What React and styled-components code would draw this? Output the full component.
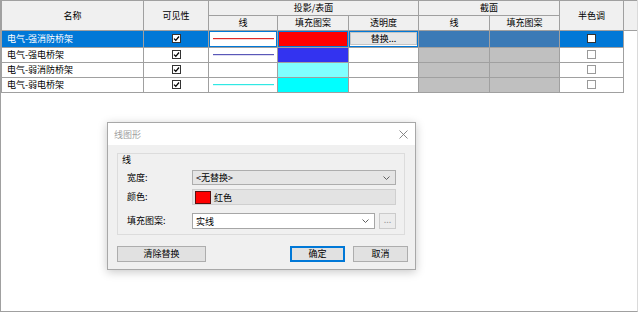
import styled, { createGlobalStyle } from 'styled-components'

const GlobalStyle = createGlobalStyle`
  html, body {
    margin: 0;
    padding: 0;
    background: #fff;
  }
  body {
    font-family: "Noto Sans CJK SC", "Noto Sans", sans-serif;
    font-size: 9px;
    color: #000;
  }
`

const Frame = styled.div`
  position: relative;
  width: 636px;
  height: 311px;
  border-left: 1px solid #a0a0a0;
  border-right: 1px solid #dadada;
  border-bottom: 1px solid #a0a0a0;
  overflow: hidden;
`

const Grid = styled.table`
  border-collapse: collapse;
  table-layout: fixed;
  width: 636px;
  line-height: 14px;
`

const Head = styled.th`
  height: 14px;
  padding: 0;
  font-weight: normal;
  text-align: center;
  background: #f0f0f0;
  border: 1px solid #a0a0a0;
  border-right: ${p => (p.$last ? 'none' : '1px solid #a0a0a0')};
  white-space: nowrap;
`

const Cell = styled.td`
  height: 14px;
  padding: 0;
  border: 1px solid #a0a0a0;
  text-align: center;
  vertical-align: middle;
  white-space: nowrap;
  overflow: hidden;
  background: ${p => p.$bg || '#fff'};
  color: ${p => (p.$selected ? '#fff' : '#000')};
  box-shadow: ${p => (p.$frame ? 'inset 0 0 0 1px #0078d7' : 'none')};
`

const NameCell = styled(Cell)`
  text-align: left;
  padding-left: 5px;
`

const EmptyCell = styled.td`
  padding: 0;
  border: none;
  background: #fff;
`

const Box = styled.span`
  display: inline-block;
  width: 9px;
  height: 9px;
  box-sizing: border-box;
  border: 1px solid ${p => (p.$light ? '#9a9a9a' : '#333')};
  background: #fff;
  vertical-align: middle;
  position: relative;
  top: -1px;
  svg {
    display: block;
  }
`

const LineSample = styled.svg`
  display: block;
  margin: 0 auto;
`

const OverrideButton = styled.div`
  margin: 1px 1px 2px;
  height: 11px;
  line-height: 11px;
  background: #e6e6e6;
  border: 1px solid #c4c4c4;
  color: #000;
`

const Dialog = styled.div`
  position: absolute;
  left: 106px;
  top: 122px;
  width: 307px;
  height: 146px;
  border: 1px solid #a8a8a8;
  background: #f0f0f0;
  box-shadow: 0 2px 9px rgba(0, 0, 0, 0.22);
  display: flex;
  flex-direction: column;
`

const TitleBar = styled.div`
  height: 22px;
  background: #fff;
  display: flex;
  align-items: center;
  justify-content: space-between;
  padding: 0 7px 0 6px;
  color: #a0a0a0;
`

const Body = styled.div`
  flex: 1;
  padding: 8px 7px 0 9px;
  display: flex;
  flex-direction: column;
`

const Group = styled.div`
  width: 288px;
  height: 82px;
  box-sizing: border-box;
  border: 1px solid #dcdcdc;
  padding: 0 8px 0 9px;
`

const GroupLabel = styled.div`
  line-height: 12px;
  margin-left: -5px;
`

const FieldRow = styled.div`
  display: grid;
  grid-template-columns: 65px 1fr;
  align-items: center;
  margin-top: ${p => p.$gap}px;
  height: ${p => p.$h}px;
`

const FieldLabel = styled.div`
  line-height: 12px;
`

const Combo = styled.div`
  flex: 1;
  height: 100%;
  box-sizing: border-box;
  display: flex;
  align-items: center;
  justify-content: space-between;
  padding: 0 5px 0 3px;
  border: 1px solid ${p => (p.$white ? '#a6a6a6' : '#adadad')};
  background: ${p => (p.$white ? '#fff' : '#e5e5e5')};
`

const ComboWrap = styled.div`
  display: flex;
  gap: 4px;
  height: 100%;
`

const ColorField = styled.div`
  height: 100%;
  box-sizing: border-box;
  display: flex;
  align-items: center;
  gap: 3px;
  padding-left: 2px;
  border: 1px solid #cfcfcf;
  background: #e3e3e3;
`

const Swatch = styled.span`
  width: 16px;
  height: 13px;
  box-sizing: border-box;
  border: 1px solid #5a1010;
  background: ${p => p.$color};
`

const MoreButton = styled.div`
  width: 17px;
  flex: none;
  box-sizing: border-box;
  border: 1px solid #cbcbcb;
  background: #ececec;
  color: #9a9a9a;
  text-align: center;
  line-height: 12px;
`

const Buttons = styled.div`
  margin-top: 11px;
  display: flex;
  align-items: center;
  height: 16px;
`

const Button = styled.div`
  width: ${p => p.$w}px;
  height: 16px;
  box-sizing: border-box;
  border: 1px solid ${p => (p.$primary ? '#0078d7' : '#adadad')};
  box-shadow: ${p => (p.$primary ? 'inset 0 0 0 1px #0078d7' : 'none')};
  background: #e1e1e1;
  text-align: center;
  line-height: 14px;
  margin-left: ${p => p.$ml || 0}px;
`

const Chevron = () => (
  <svg width="7" height="4" viewBox="0 0 7 4">
    <path d="M0.5 0.5 L3.5 3.5 L6.5 0.5" fill="none" stroke="#606060" strokeWidth="1" />
  </svg>
)

const Check = () => (
  <svg width="7" height="7" viewBox="0 0 7 7">
    <path d="M1 3.6 L2.8 5.3 L6 1.5" fill="none" stroke="#000" strokeWidth="1.3" />
  </svg>
)

const rows = [
  { name: '电气-强消防桥架', line: '#e02828', fill: '#ff0000', selected: true },
  { name: '电气-强电桥架', line: '#5a58b8', fill: '#3333f0' },
  { name: '电气-弱消防桥架', line: null, fill: '#80ffff' },
  { name: '电气-弱电桥架', line: '#30e8e4', fill: '#00ffff' },
]

const BLUE = '#0078d7'

export default function App() {
  return (
    <>
      <GlobalStyle />
      <Frame>
        <Grid>
          <colgroup>
            <col style={{ width: 142 }} />
            <col style={{ width: 65 }} />
            <col style={{ width: 69 }} />
            <col style={{ width: 71 }} />
            <col style={{ width: 70 }} />
            <col style={{ width: 71 }} />
            <col style={{ width: 70 }} />
            <col style={{ width: 64 }} />
            <col style={{ width: 14 }} />
          </colgroup>
          <thead>
            <tr>
              <Head rowSpan={2}>名称</Head>
              <Head rowSpan={2}>可见性</Head>
              <Head colSpan={3}>投影/表面</Head>
              <Head colSpan={2}>截面</Head>
              <Head rowSpan={2}>半色调</Head>
              <Head rowSpan={2} $last />
            </tr>
            <tr>
              <Head>线</Head>
              <Head>填充图案</Head>
              <Head>透明度</Head>
              <Head>线</Head>
              <Head>填充图案</Head>
            </tr>
          </thead>
          <tbody>
            {rows.map(r => (
              <tr key={r.name}>
                <NameCell $bg={r.selected ? BLUE : '#fff'} $selected={r.selected}>
                  {r.name}
                </NameCell>
                <Cell $bg={r.selected ? BLUE : '#fff'}>
                  <Box>
                    <Check />
                  </Box>
                </Cell>
                <Cell $frame={r.selected}>
                  {r.line ? (
                    <LineSample width="61" height="2" viewBox="0 0 61 2">
                      <rect x="0" y="0" width="61" height="1.2" fill={r.line} />
                    </LineSample>
                  ) : null}
                </Cell>
                <Cell $bg={r.fill} $frame={r.selected} />
                <Cell $frame={r.selected}>
                  {r.selected && <OverrideButton>替换...</OverrideButton>}
                </Cell>
                <Cell $bg={r.selected ? '#3b7ab6' : '#c0c0c0'} />
                <Cell $bg={r.selected ? '#3b7ab6' : '#c0c0c0'} />
                <Cell $bg={r.selected ? BLUE : '#fff'}>
                  <Box $light={!r.selected} />
                </Cell>
                <EmptyCell />
              </tr>
            ))}
          </tbody>
        </Grid>

        <Dialog>
          <TitleBar>
            <span>线图形</span>
            <svg width="9" height="9" viewBox="0 0 9 9">
              <path d="M0.5 0.5 L8.5 8.5 M8.5 0.5 L0.5 8.5" stroke="#7a7a7a" strokeWidth="0.9" />
            </svg>
          </TitleBar>
          <Body>
            <Group>
              <GroupLabel>线</GroupLabel>
              <FieldRow $gap={4} $h={15}>
                <FieldLabel>宽度:</FieldLabel>
                <Combo>
                  <span>&lt;无替换&gt;</span>
                  <Chevron />
                </Combo>
              </FieldRow>
              <FieldRow $gap={4} $h={16}>
                <FieldLabel>颜色:</FieldLabel>
                <ColorField>
                  <Swatch $color="#ff0000" />
                  <span>红色</span>
                </ColorField>
              </FieldRow>
              <FieldRow $gap={8} $h={16}>
                <FieldLabel>填充图案:</FieldLabel>
                <ComboWrap>
                  <Combo $white>
                    <span>实线</span>
                    <Chevron />
                  </Combo>
                  <MoreButton>...</MoreButton>
                </ComboWrap>
              </FieldRow>
            </Group>
            <Buttons>
              <Button $w={89}>清除替换</Button>
              <Button $w={55} $ml={84} $primary>
                确定
              </Button>
              <Button $w={55} $ml={8}>
                取消
              </Button>
            </Buttons>
          </Body>
        </Dialog>
      </Frame>
    </>
  )
}
